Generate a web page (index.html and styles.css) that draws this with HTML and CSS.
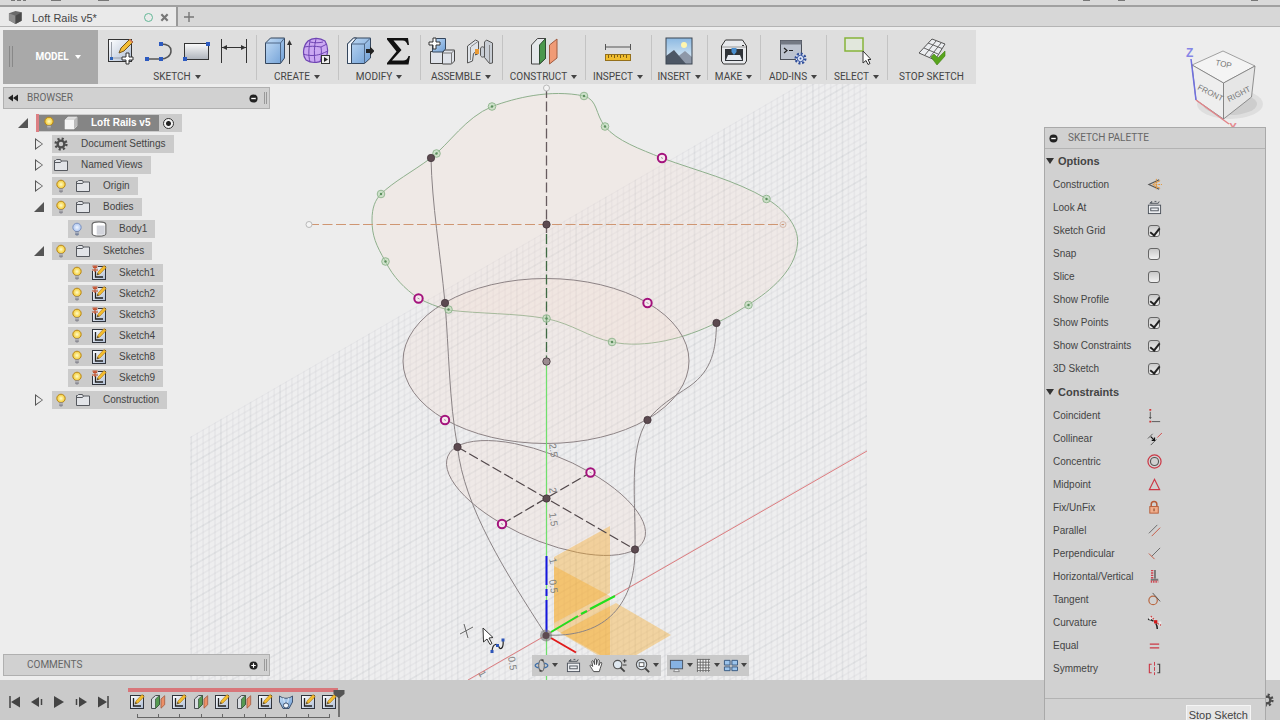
FILE: index.html
```html
<!DOCTYPE html>
<html lang="en">
<head>
<meta charset="utf-8">
<meta name="viewport" content="width=device-width, initial-scale=1">
<title>Loft Rails v5</title>
<link rel="stylesheet" href="styles.css">
</head>
<body>
<svg class="defs" aria-hidden="true">
  <defs>
    <linearGradient id="gBlue" x1="0" y1="0" x2="1" y2="1"><stop offset="0" stop-color="#c3dcf5"/><stop offset="1" stop-color="#6f9fd6"/></linearGradient>
    <linearGradient id="gPaper" x1="0" y1="0" x2="1" y2="1"><stop offset="0" stop-color="#fff"/><stop offset="1" stop-color="#aebdd4"/></linearGradient>
    <linearGradient id="gGray" x1="0" y1="0" x2="0" y2="1"><stop offset="0" stop-color="#fbfbfb"/><stop offset="1" stop-color="#aeb3bb"/></linearGradient>
    <linearGradient id="gSky" x1="0" y1="0" x2="0" y2="1"><stop offset="0" stop-color="#8cb9e2"/><stop offset="1" stop-color="#e8f3f8"/></linearGradient>
    <radialGradient id="gBulb"><stop offset="0" stop-color="#fffcc8"/><stop offset="1" stop-color="#f3c92e"/></radialGradient>
    <radialGradient id="gOff"><stop offset="0" stop-color="#f2f7ff"/><stop offset="1" stop-color="#a9c2ee"/></radialGradient>
  </defs>
  <symbol id="bulb" viewBox="0 0 14 14"><circle cx="7" cy="5.400" r="4.200" fill="url(#gBulb)" stroke="#b8871c"/><path d="M5.200 9.300h3.600v3L8 13.500H6l-.8-1.200z" fill="#8b8b94"/><path d="M5.200 10.800h3.600" stroke="#ddd" stroke-width=".7"/></symbol>
  <symbol id="bulb-off" viewBox="0 0 14 14"><circle cx="7" cy="5.400" r="4.200" fill="url(#gOff)" stroke="#7f94c0"/><path d="M5.200 9.300h3.600v3L8 13.500H6l-.8-1.200z" fill="#77839c"/><path d="M5.200 10.800h3.600" stroke="#ddd" stroke-width=".7"/></symbol>
  <symbol id="folder" viewBox="0 0 14 14"><path d="M.5 12.500V2.500h1l1-1h4l.7 1.500h6.300v9.500z" fill="#e2e4e8" stroke="#55585e"/><path d="M1 4.500h5.500l1-1.500" fill="none" stroke="#55585e"/></symbol>
  <symbol id="sketch" viewBox="0 0 16 16"><rect x="1.500" y="1.500" width="13" height="13" fill="url(#gPaper)" stroke="#30343c"/><path d="M4.500 4v8H12" fill="none" stroke="#222" stroke-width="1.300"/><path d="M6 10l1-3 6-6.500 2.200 2L9 9z" fill="#f4bd2d" stroke="#a8741b" stroke-width=".6"/><path d="M6 10l.7-2 1.300 1.300z" fill="#333"/></symbol>
  <symbol id="sketch3" viewBox="0 0 16 16"><use href="#sketch"/><path d="M0 0h7v6H0z" fill="#cbcbcb"/><path d="M1 5h6M2 2.500h4M4 1v6M1.500 1.200h5" stroke="#c5512f" stroke-width="1.200"/></symbol>
  <symbol id="planes" viewBox="0 0 16 16"><path d="M1.500 5l4-3.500h4v9l-4 4h-4z" fill="#d9dde2" stroke="#4a4d52"/><path d="M5.500 5l4-3.500v9l-4 4z" fill="#559a51" stroke="#36533a" stroke-width=".7"/><path d="M11 5l3.700-3.300v9L11 14.200z" fill="#ec8f67" stroke="#9f5b40" stroke-width=".8"/></symbol>
  <symbol id="loft" viewBox="0 0 16 16"><path d="M1.500 2c4 3 9 3 13 0v6L11 14.500H5L1.500 8z" fill="url(#gBlue)" stroke="#3f536f"/><path d="M5.500 4l1.500 8M10.500 4L9 12" stroke="#e9f3ff" stroke-width=".8"/><circle cx="8" cy="11.500" r="2.600" fill="#eef4fb" stroke="#3f536f"/></symbol>
  <symbol id="gear" viewBox="0 0 14 14"><circle cx="7" cy="7" r="5.400" fill="none" stroke="#4c4c4c" stroke-width="2.400" stroke-dasharray="2.100 2.140"/><circle cx="7" cy="7" r="3.400" fill="none" stroke="#4c4c4c" stroke-width="2.400"/></symbol>
  <symbol id="lookat" viewBox="0 0 16 16"><rect x="1.500" y="5.500" width="13" height="9" fill="#eceef1" stroke="#4c525b"/><rect x="4" y="8.500" width="8" height="3" fill="none" stroke="#4c525b"/><path d="M3 3.500h9l1-2M3 3.500l2-2v2M8 1.500h2" fill="none" stroke="#4c525b"/></symbol>
</svg>

<div class="app">
  <header class="titlebar" aria-hidden="true">
    <svg class="stubs" viewBox="0 0 120 3"><path d="M11 0h4v1h-4zM17 0h4v1h-4zM23 0h3v1h-3zM51 0h10v1H51zM98 0h11v1H98z" fill="#777"/></svg>
    <svg class="stubs" viewBox="0 0 240 3"><path d="M43 0h7v1h-7zM78 0h7v1h-7zM211 0h7v1h-7z" fill="#777"/></svg>
  </header>

  <nav class="tabs" aria-label="Documents">
    <div class="tab">
      <svg class="tab-cube" viewBox="0 0 16 16"><path d="M1 3.500L8 1l6.500 1.500v9L8 15l-7-4z" fill="#6a6a6a"/><path d="M1 3.500L8 6v9l-7-4z" fill="#8f8f8f"/><path d="M8 6l6.500-3.500v9L8 15z" fill="#4a4a4a"/></svg>
      <span class="tab-name">Loft Rails v5*</span>
      <span class="tab-status"></span>
      <button class="tab-button" aria-label="Close"><svg viewBox="0 0 10 10"><path d="M1.500 1.500l7 7M8.500 1.500l-7 7" stroke="#777" stroke-width="2.400"/></svg></button>
    </div>
    <button class="tab-button tab-new" aria-label="New tab"><svg viewBox="0 0 10 10"><path d="M5 0v10M0 5h10" stroke="#777" stroke-width="1.400"/></svg></button>
  </nav>

  <main class="workspace">
    <svg class="canvas" viewBox="0 27 1280 653" preserveAspectRatio="xMidYMid slice" role="img" aria-label="Sketch model">
      <defs>
        <pattern id="grid" width="29.600" height="34.200" patternUnits="userSpaceOnUse" patternTransform="translate(546.500 635) skewY(-30)">
          <path d="M5.920 0v34.200M11.840 0v34.200M17.760 0v34.200M23.680 0v34.200M0 6.840h29.600M0 13.680h29.600M0 20.520h29.600M0 27.360h29.600" stroke="#8a8f95" stroke-opacity=".2" stroke-width=".7"/>
          <path d="M0 0v34.200M29.600 0v34.200M0 0h29.600M0 34.200h29.600" stroke="#7c8187" stroke-opacity=".26" stroke-width=".8"/>
        </pattern>
        <symbol id="gp" viewBox="-5 -5 10 10"><circle r="3.800" fill="#b9dab6" fill-opacity=".6" stroke="#8db38b" stroke-width=".9"/><circle r="1.200" fill="#5c8f5e"/></symbol>
        <symbol id="dp" viewBox="-5 -5 10 10"><circle r="3.700" fill="#5c4a50" stroke="#3f3238" stroke-width=".7"/></symbol>
        <symbol id="mp" viewBox="-6 -6 12 12"><circle r="4.200" fill="#f6e8ee" stroke="#a3127c" stroke-width="2"/><path d="M-1-.5l2 1" stroke="#888" stroke-width=".8"/></symbol>
      </defs>
      <path d="M190 437L801 84h66v596H190z" fill="#eeeeef"/>
      <path d="M190 437L801 84h66v596H190z" fill="url(#grid)"/>

      <g class="profile" fill="#f5d9cd" fill-opacity=".22">
        <path d="M584 96C598 100 595 114 605 126.500C617 141 640 149 662 158C697 171 735 180 767 199C790 213 799 231 797.500 244C795 270 772 290 748 305C735 313 727 318 716 323C686 338 645 349 612 342C588 337 573 324 546 318.500C515 313 480 314 448 310C438 307 427 303 418 298C405 289 393 277 385.500 261.500C376 245 372 236 372 220C372 208 375 200 381 194C393 182 412 172 431 158C450 143 465 118 492 106.500C515 98 550 89 584 96z" stroke="#8fb08d"/>
        <ellipse cx="546" cy="361" rx="143" ry="82.500" stroke="#8d8385"/>
        <circle r="1" transform="matrix(89 51.500 44.500 -25.500 546 498)" vector-effect="non-scaling-stroke" stroke="#8d8385"/>
      </g>

      <g fill="#f7a823" fill-opacity=".38">
        <path d="M554 557l56-31v67l-56 30z"/>
        <path d="M554 566l56 30v61h-6l-50-28z"/>
        <path d="M560 633l56-30 55 32-38 22h-32z"/>
      </g>

      <path d="M546.500 361v319" stroke="#6fe06c" stroke-width="1.200"/>
      <path d="M867 451L468 680" stroke="#df7d80"/>

      <g fill="none" stroke="#8a8385">
        <path d="M431 158C432 205 440 250 445 303C449 350 449 400 457.500 447C464 507 506 573 546 635"/>
        <path d="M716.500 323C716 350 712 370 690 386C672 398 660 405 647.500 420C628 450 636 500 635 549C635 610 600 638 546 635"/>
      </g>
      <g fill="none" stroke-dasharray="10 3.500">
        <path d="M309 224.500h475" stroke="#cf9672" stroke-width="1.200"/>
        <path d="M546.500 88v146" stroke="#675b5f" stroke-width="1.300"/>
        <path d="M546.500 234v127" stroke="#3f6a43" stroke-width="1.300"/>
        <path d="M457.500 447L635 549.500M502 524l88.500-51.500" stroke="#51474a" stroke-width="1.200"/>
      </g>
      <g fill="none" stroke-width="2">
        <path d="M546.500 556v29M546.500 589v7M546.500 600v32" stroke="#1616e0"/>
        <path d="M551 632l27-16M581 614l6-3M590 609l25-13" stroke="#22e01d"/>
        <path d="M551 638l25 14.500" stroke="#e01b1b"/>
      </g>

      <g class="ruler">
        <text transform="translate(549 444) rotate(82)">2.5</text>
        <text transform="translate(549 488) rotate(82)">2</text>
        <text transform="translate(549 513) rotate(82)">1.5</text>
        <text transform="translate(549 559) rotate(76)">1</text>
        <text transform="translate(549 580) rotate(82)">0.5</text>
        <text transform="translate(508 657) rotate(82)">0.5</text>
        <text transform="translate(478 673) rotate(60)">1</text>
      </g>

      <g fill="#f4f4f4" stroke="#b9b9b9"><circle cx="309" cy="224.500" r="3"/><circle cx="783" cy="224.500" r="3" fill="none" stroke="#d6b9ab"/><circle cx="546.500" cy="88" r="3"/></g>
      <g>
        <use href="#gp" x="579" y="91" width="10" height="10"/><use href="#gp" x="600" y="121.500" width="10" height="10"/>
        <use href="#gp" x="761.500" y="194" width="10" height="10"/><use href="#gp" x="743.500" y="300" width="10" height="10"/>
        <use href="#gp" x="607" y="337" width="10" height="10"/><use href="#gp" x="541.500" y="313.500" width="10" height="10"/>
        <use href="#gp" x="443.500" y="304.500" width="10" height="10"/><use href="#gp" x="380.500" y="256.500" width="10" height="10"/>
        <use href="#gp" x="376" y="189" width="10" height="10"/><use href="#gp" x="431.500" y="148.500" width="10" height="10"/>
        <use href="#gp" x="487" y="101.500" width="10" height="10"/>
        <use href="#dp" x="426" y="153" width="10" height="10"/><use href="#dp" x="541.500" y="219.500" width="10" height="10"/>
        <use href="#dp" x="440" y="298" width="10" height="10"/><use href="#dp" x="711.500" y="318" width="10" height="10"/>
        <use href="#dp" x="642.500" y="415" width="10" height="10"/><use href="#dp" x="452.500" y="442" width="10" height="10"/>
        <use href="#dp" x="541.500" y="493.500" width="10" height="10"/><use href="#dp" x="630" y="544.500" width="10" height="10"/>
        <use href="#mp" x="656" y="152" width="12" height="12"/><use href="#mp" x="412.500" y="292.500" width="12" height="12"/>
        <use href="#mp" x="641.500" y="297" width="12" height="12"/><use href="#mp" x="439" y="414" width="12" height="12"/>
        <use href="#mp" x="584.500" y="466.500" width="12" height="12"/><use href="#mp" x="496" y="518" width="12" height="12"/>
        <circle cx="546.500" cy="361.500" r="3.700" fill="#9b8b90" stroke="#55474d"/>
        <circle cx="546" cy="635.500" r="6" fill="#777" fill-opacity=".6"/><circle cx="546" cy="635.500" r="3.500" fill="#5c4a50"/>
      </g>
      <path d="M460 634l13-7M464 624l4 14" stroke="#666" fill="none"/>
      <path d="M483 628l.5 14 3.500-3 3 5.500 2-1-3-5.500 4-.5z" fill="#fff" stroke="#333"/>
      <path d="M492 651c1-9 6-7 7-4s5 2 4-7" fill="none" stroke="#222" stroke-width="1.200"/>
      <path d="M490.500 650h3v3h-3zM496 644h3v3h-3zM501.500 638.500h3v3h-3z" fill="#2d55b8"/>
    </svg>

    <svg class="viewcube" viewBox="1180 40 90 90" role="img" aria-label="View cube">
      <ellipse cx="1230" cy="104" rx="33" ry="15" fill="#777" fill-opacity=".12"/><ellipse cx="1230" cy="104" rx="27" ry="11" fill="#777" fill-opacity=".16"/>
      <path d="M1223 51l32 15-31.500 17L1192 65z" fill="#f4f4f4" stroke="#8b8b8b" stroke-width=".8"/>
      <path d="M1192 65l31.500 18v36L1196 100z" fill="#eee" stroke="#777" stroke-width=".8"/>
      <path d="M1255 66l-31.500 17v36l28-22z" fill="#e6e6e6" stroke="#777" stroke-width=".8"/>
      <path d="M1191 59l5 41" stroke="#6f6fe0" stroke-width="1.500"/><path d="M1196 100l33 24" stroke="#e3858a" stroke-width="1.500"/>
      <text class="cube-face" transform="translate(1215 65) rotate(12)">TOP</text>
      <text class="cube-face" transform="translate(1197 89) rotate(27)">FRONT</text>
      <text class="cube-face" transform="translate(1229 102) rotate(-27)">RIGHT</text>
      <text class="axis axis-z" x="1186" y="57">Z</text><text class="axis axis-x" x="1229" y="132">X</text>
    </svg>

    <div class="overlay">
      <div class="toolbar" role="toolbar" aria-label="Tools">
        <button class="model"><span class="grip"></span>MODEL<span class="caret"></span></button>
        <div class="group">
          <div class="tools">
            <button aria-label="Create sketch"><svg viewBox="0 0 28 28"><rect x="2.500" y="2.500" width="23" height="22" fill="url(#gPaper)" stroke="#333"/><path d="M5.500 5v16H23" fill="none" stroke="#9a9fa8"/><path d="M13 16l2-5L24 2l3 3-9 9z" fill="#f3bd35" stroke="#76551d"/><path d="M23 3l1-1 3 3-1 1z" fill="#d77b62"/><path d="M4 20h3v3H4z" fill="#2d62b8"/><path d="M20 16h3v4h4v3h-4v4h-3v-4h-4v-3h4z" fill="#fff" stroke="#333"/></svg></button>
            <button aria-label="Line"><svg viewBox="0 0 28 28"><path d="M3 22h14c5 0 10-3 10-8s-4-7-10-7" fill="none" stroke="#555" stroke-width="1.500"/><path d="M1 20h4v4H1zM15 20h4v4h-4zM15 5h4v4h-4z" fill="#2c5ac0"/></svg></button>
            <button aria-label="Rectangle"><svg viewBox="0 0 28 28"><rect x="2.500" y="6.500" width="24" height="16" fill="url(#gGray)" stroke="#333"/><path d="M24 5h4v4h-4zM1 20h4v4H1z" fill="#2c5ac0"/></svg></button>
            <button aria-label="Dimension"><svg viewBox="0 0 28 28"><path d="M1.500 2v24M26.500 2v24M2 10.500h24" stroke="#333" fill="none"/><path d="M2 10.500l5-2.500v5zM26 10.500L21 8v5z" fill="#333"/></svg></button>
          </div>
          <button class="group-label">SKETCH<span class="caret"></span></button>
        </div>
        <div class="group">
          <div class="tools">
            <button aria-label="Extrude"><svg viewBox="0 0 28 28"><path d="M1.500 6l5-5h14v20l-4 5.500h-15z" fill="url(#gBlue)" stroke="#34465d"/><path d="M1.500 6h15l4-5M16.500 6v20" fill="none" stroke="#4f6786"/><path d="M25.500 6v21" stroke="#333"/><path d="M25.500 3l2.500 5h-5z" fill="#333"/></svg></button>
            <button aria-label="Create form"><svg viewBox="0 0 28 28"><path d="M6 4c5-4 12-3 17 0 3 5 3 12 1 17-5 5-14 6-20 2-4-5-3-14 2-19z" fill="#cba8f2" stroke="#6f45b3" stroke-width="1.200"/><path d="M2 10c6-1 11-1 17 0 2-1 4-2 6-3M1 17c6 2 12 2 18 0 2-1 5-2 7-3M8 3c-1 7-2 15 0 22M14 2c-2 7-2 16-1 24M19 10c1 5 0 11-1 15M8 5c5 1 9 1 13 0" fill="none" stroke="#6f45b3"/><rect x="19.500" y="18.500" width="8" height="8" fill="#eee" stroke="#333"/><path d="M22 20l4 2.500-4 2.500z" fill="#222"/></svg></button>
          </div>
          <button class="group-label">CREATE<span class="caret"></span></button>
        </div>
        <div class="group">
          <div class="tools">
            <button aria-label="Press pull"><svg viewBox="0 0 28 28"><path d="M1.500 7l6-6h17v20l-6 5.500h-17z" fill="url(#gBlue)" stroke="#34465d"/><path d="M1.500 7l6-6h3l-5 6v19.500h-4z" fill="#f1f5fb" stroke="#34465d"/><path d="M5.500 7h13l6-6M18.500 7v19" fill="none" stroke="#4f6786"/><path d="M20 12h4V9.500l4.500 4.500-4.500 4.500V16h-4z" fill="#222"/></svg></button>
            <button aria-label="Parameters"><svg viewBox="0 0 28 28"><path d="M3 1h21l1 7h-1.500c-1-3-2-4.500-5-4.500H9.500l8 9.500L8 23.500h11c3 0 4.500-1.500 5.500-4.500H26l-1.500 8.500H3V26l9.500-11.500L3 2.500z" fill="#111"/></svg></button>
          </div>
          <button class="group-label">MODIFY<span class="caret"></span></button>
        </div>
        <div class="group">
          <div class="tools">
            <button aria-label="New component"><svg viewBox="0 0 28 28"><path d="M2.500 14.500h12v12h-12zM14.500 16l2-3h10v11l-3 3h-9z" fill="#dfe3ea" stroke="#444"/><path d="M14.500 16h9l3-3M23.500 16v11" fill="none" stroke="#777"/><path d="M4.500 5l4-3.500h9V12l-3 3h-10z" fill="url(#gBlue)" stroke="#34465d"/><path d="M5 1h3v4h4v3H8v4H5V8H1V5h4z" fill="#fff" stroke="#333"/></svg></button>
            <button aria-label="Joint"><svg viewBox="0 0 28 28"><path d="M1.500 9l8-6 3 1.500v12l-3 1.500v-3l-2 1.500-1 7.500-5 2z" fill="#dfe3e8" stroke="#555"/><path d="M4.500 10v13M5 9.500l7-5" stroke="#888"/><path d="M9 12h4v5H9z" fill="#e99a35"/><path d="M14.500 12c0-3 4-3 4 0v7c-1 2-4 1-4-1zM18.500 5l2-2 6 3v20l-3 .5-5-6z" fill="#c9ced5" stroke="#555"/><path d="M23.500 8v18" stroke="#888"/></svg></button>
          </div>
          <button class="group-label">ASSEMBLE<span class="caret"></span></button>
        </div>
        <div class="group">
          <div class="tools"><button aria-label="Offset plane"><svg viewBox="0 0 28 28"><path d="M1.500 8l6-6.500h8v20l-6 5.500h-8z" fill="#e5e8eb" stroke="#444"/><path d="M9.500 8l6-6.500v20l-6 5.500z" fill="#4b984c" stroke="#2d4d31"/><path d="M19.500 8L27 2v19l-7.500 6z" fill="#f09b76" stroke="#a05a3e"/></svg></button></div>
          <button class="group-label">CONSTRUCT<span class="caret"></span></button>
        </div>
        <div class="group">
          <div class="tools"><button aria-label="Measure"><svg viewBox="0 0 28 28"><path d="M1.500 7v6M26.500 7v6M2 10h24" stroke="#555"/><rect x="1.500" y="17.500" width="25" height="6" fill="#f0bd2d" stroke="#95701b"/><path d="M4.500 18v3M7.500 18v2M10.500 18v3M13.500 18v2M16.500 18v3M19.500 18v2M22.500 18v3" stroke="#805f16"/></svg></button></div>
          <button class="group-label">INSPECT<span class="caret"></span></button>
        </div>
        <div class="group">
          <div class="tools"><button aria-label="Insert image"><svg viewBox="0 0 28 28"><rect x="1" y="1" width="26" height="26" fill="url(#gSky)"/><circle cx="19" cy="8" r="3" fill="#fff6ae"/><path d="M11 21l9-7 7 6v7H11z" fill="#8e98a8"/><path d="M1 19l8-6 12 14H1z" fill="#4d5765"/><rect x="1" y="1" width="26" height="26" fill="none" stroke="#3d4652"/></svg></button></div>
          <button class="group-label">INSERT<span class="caret"></span></button>
        </div>
        <div class="group">
          <div class="tools"><button aria-label="3D print"><svg viewBox="0 0 28 28"><path d="M1.500 9l4-6h17l4 6v15l-2 3h-21l-2-3z" fill="#e7e9ec" stroke="#333"/><path d="M2 10h24" stroke="#999"/><path d="M5 12h18v12H5z" fill="#2f3338"/><path d="M8 18h12l2 5H6z" fill="#e8ecf2"/><path d="M11.500 11h5v4L14 18l-2.500-3z" fill="#4a8fd0"/><path d="M22 8h2v1h-2z" fill="#333"/></svg></button></div>
          <button class="group-label">MAKE<span class="caret"></span></button>
        </div>
        <div class="group">
          <div class="tools"><button aria-label="Scripts and add-ins"><svg viewBox="0 0 28 28"><rect x="1.500" y="3.500" width="21" height="19" fill="#bcc3cf" stroke="#4a4f58"/><path d="M1.500 3.500h21v4h-21z" fill="#737984"/><path d="M5 11l3 2.500L5 16M10 13.500h4" fill="none" stroke="#222" stroke-width="1.200"/><circle cx="21.500" cy="21.500" r="4.800" fill="#eef2fb" stroke="#314f9a" stroke-width="2.400" stroke-dasharray="2 1.700"/><circle cx="21.500" cy="21.500" r="3.200" fill="#dfe7f8" stroke="#314f9a"/><circle cx="21.500" cy="21.500" r="1" fill="#314f9a"/></svg></button></div>
          <button class="group-label">ADD-INS<span class="caret"></span></button>
        </div>
        <div class="group">
          <div class="tools"><button aria-label="Select"><svg viewBox="0 0 28 28"><rect x="2" y="1" width="18" height="13" fill="#e1e7dc" stroke="#86b43a" stroke-width="1.500"/><path d="M20 14v12l3-2.500 2 4 2-1-2-4h3z" fill="#fff" stroke="#333"/></svg></button></div>
          <button class="group-label">SELECT<span class="caret"></span></button>
        </div>
        <div class="group">
          <div class="tools"><button aria-label="Finish sketch"><svg viewBox="0 0 28 28"><path d="M14 2l13 5-10 16L1 16z" fill="#eceef1" stroke="#555"/><path d="M10 6l14 5.500M6 11l14 6M18 4L7 18M23 6L12 20" stroke="#666" fill="none"/><path d="M13 20l3-3 4 4 7-7v5l-8 9z" fill="#58a51d" stroke="#3f7d12" stroke-width=".6"/></svg></button></div>
          <button class="group-label">STOP SKETCH</button>
        </div>
      </div>

      <aside class="browser">
        <div class="bar">
          <button class="bar-icon" aria-label="Collapse panel"><svg viewBox="0 0 10 10"><path d="M5 1.500v7L0 5zM10 1.500v7L5 5z" fill="#222"/></svg></button>
          <h2>BROWSER</h2>
          <button class="round-icon" aria-label="Hide browser"><svg viewBox="0 0 10 10"><circle cx="5" cy="5" r="4.500" fill="#222"/><path d="M2.500 5h5" stroke="#fff" stroke-width="1.500"/></svg></button>
          <span class="bar-grip"></span>
        </div>
        <ul class="tree">
          <li>
            <div class="row root"><button class="twist open" aria-label="Collapse"></button><div class="chip root-chip"><span class="root-name"><svg class="bulb"><use href="#bulb"/></svg><svg class="icon" viewBox="0 0 14 14"><path d="M1 4l3-3h9v9l-3 3H1z" fill="#dadada" stroke="#eee" stroke-width=".6"/><path d="M1 4h9v9H1z" fill="#f5f5f5"/><path d="M10 4l3-3v9l-3 3z" fill="#bbb"/></svg>Loft Rails v5</span><input class="active-dot" type="radio" checked aria-label="Activate component"></div></div>
            <ul>
              <li><div class="row"><button class="twist" aria-label="Expand"></button><div class="chip"><svg class="icon"><use href="#gear"/></svg>Document Settings</div></div></li>
              <li><div class="row"><button class="twist" aria-label="Expand"></button><div class="chip"><svg class="icon"><use href="#folder"/></svg>Named Views</div></div></li>
              <li><div class="row"><button class="twist" aria-label="Expand"></button><div class="chip"><svg class="bulb"><use href="#bulb"/></svg><svg class="icon"><use href="#folder"/></svg>Origin</div></div></li>
              <li><div class="row"><button class="twist open" aria-label="Collapse"></button><div class="chip"><svg class="bulb"><use href="#bulb"/></svg><svg class="icon"><use href="#folder"/></svg>Bodies</div></div>
                <ul class="leaves">
                  <li><div class="row leaf"><div class="chip"><svg class="bulb"><use href="#bulb-off"/></svg><svg class="icon" viewBox="0 0 14 14"><path d="M1 3c0-3 12-3 12 0v8c0 3-12 3-12 0z" fill="#fff" stroke="#666"/><path d="M5 4h7v8H5z" fill="#d3d5dc"/></svg>Body1</div></div></li>
                </ul>
              </li>
              <li><div class="row"><button class="twist open" aria-label="Collapse"></button><div class="chip"><svg class="bulb"><use href="#bulb"/></svg><svg class="icon"><use href="#folder"/></svg>Sketches</div></div>
                <ul class="leaves">
                  <li><div class="row leaf"><div class="chip"><svg class="bulb"><use href="#bulb"/></svg><svg class="icon"><use href="#sketch3"/></svg>Sketch1</div></div></li>
                  <li><div class="row leaf"><div class="chip"><svg class="bulb"><use href="#bulb"/></svg><svg class="icon"><use href="#sketch3"/></svg>Sketch2</div></div></li>
                  <li><div class="row leaf"><div class="chip"><svg class="bulb"><use href="#bulb"/></svg><svg class="icon"><use href="#sketch3"/></svg>Sketch3</div></div></li>
                  <li><div class="row leaf"><div class="chip"><svg class="bulb"><use href="#bulb"/></svg><svg class="icon"><use href="#sketch"/></svg>Sketch4</div></div></li>
                  <li><div class="row leaf"><div class="chip"><svg class="bulb"><use href="#bulb"/></svg><svg class="icon"><use href="#sketch"/></svg>Sketch8</div></div></li>
                  <li><div class="row leaf"><div class="chip"><svg class="bulb"><use href="#bulb"/></svg><svg class="icon"><use href="#sketch3"/></svg>Sketch9</div></div></li>
                </ul>
              </li>
              <li><div class="row"><button class="twist" aria-label="Expand"></button><div class="chip"><svg class="bulb"><use href="#bulb"/></svg><svg class="icon"><use href="#folder"/></svg>Construction</div></div></li>
            </ul>
          </li>
        </ul>
      </aside>

      <div class="dock">
        <div class="bar comments">
          <span class="bar-icon"></span>
          <h2>COMMENTS</h2>
          <button class="round-icon" aria-label="Show comments"><svg viewBox="0 0 10 10"><circle cx="5" cy="5" r="4.500" fill="#222"/><path d="M2.500 5h5M5 2.500v5" stroke="#fff" stroke-width="1.300"/></svg></button>
          <span class="bar-grip"></span>
        </div>
        <div class="navbar">
          <div class="nav-group">
            <button aria-label="Orbit"><svg viewBox="0 0 16 16"><ellipse cx="8" cy="8" rx="3" ry="6.500" fill="none" stroke="#555"/><path d="M5 5.500c-5 1-5 4 0 5M11 5.500c5 1 5 4 0 5" fill="none" stroke="#3f6fa8" stroke-width="1.300"/><path d="M6 12l3 1.500L6 15zM10 4L7 2.500 10 1z" fill="#444"/></svg><span class="caret"></span></button>
            <button aria-label="Look at"><svg><use href="#lookat"/></svg></button>
            <button aria-label="Pan"><svg viewBox="0 0 16 16"><path d="M5 14.500c-2-3-3-5-4-6 0-1.500 1.500-1 3 .5L3 4c0-1.500 1.500-1.500 2 0l1 3V2c0-1.500 2-1.500 2 0v5l1-4.500c.5-1.300 2-1 2 .5l-.5 5 1.500-3c1-1 2 0 1.500 1.500L12 11l-1 3.500z" fill="#fff" stroke="#444"/></svg></button>
            <button aria-label="Zoom"><svg viewBox="0 0 16 16"><circle cx="6" cy="7" r="4.500" fill="#dfe8f0" stroke="#555" stroke-width="1.200"/><path d="M9 10l4.500 4.500" stroke="#444" stroke-width="2"/><path d="M11.500 3h4M13.500 1v4M11.500 7.500h4" stroke="#333"/></svg></button>
            <button aria-label="Fit"><svg viewBox="0 0 16 16"><circle cx="7" cy="7" r="5.500" fill="#dfe8f0" stroke="#555" stroke-width="1.200"/><rect x="4.500" y="5" width="5" height="4" fill="#fff" stroke="#555"/><path d="M11 11l4 4" stroke="#444" stroke-width="2"/></svg><span class="caret"></span></button>
          </div>
          <div class="nav-group">
            <button aria-label="Display settings"><svg viewBox="0 0 16 16"><rect x="1.500" y="2.500" width="13" height="9" fill="#86b2e3" stroke="#4b5360"/><path d="M6 12h4l1 2.500H5z" fill="#e6e8eb" stroke="#666" stroke-width=".7"/></svg><span class="caret"></span></button>
            <button aria-label="Grid and snaps"><svg viewBox="0 0 16 16"><path d="M1 1h14v14H1z" fill="#f3f3f3"/><path d="M1.500 1v14M4.500 1v14M7.500 1v14M10.500 1v14M13.500 1v14M1 1.500h14M1 4.500h14M1 7.500h14M1 10.500h14M1 13.500h14" stroke="#666"/></svg><span class="caret"></span></button>
            <button aria-label="Viewports"><svg viewBox="0 0 16 16"><path d="M1.500 2.500h6v5h-6zM9.500 2.500h6v5h-6zM1.500 9.500h6v4h-6zM9.500 9.500h6v4h-6z" fill="#9cc4ec" stroke="#36577f"/></svg><span class="caret"></span></button>
          </div>
        </div>
      </div>
    </div>
  </main>

  <footer class="timeline">
    <div class="playback">
      <button aria-label="Go to start"><svg viewBox="0 0 14 14"><path d="M2 1v12" stroke="#444" stroke-width="1.500"/><path d="M12 1.500v11L3 7z" fill="#444"/></svg></button>
      <button aria-label="Step back"><svg viewBox="0 0 14 14"><path d="M9 2v10L1 7z" fill="#444"/><path d="M11.500 4v6" stroke="#444" stroke-width="1.500"/></svg></button>
      <button aria-label="Play"><svg viewBox="0 0 14 14"><path d="M2 1l10 6-10 6z" fill="#444"/></svg></button>
      <button aria-label="Step forward"><svg viewBox="0 0 14 14"><path d="M5 2v10l8-5z" fill="#444"/><path d="M2.500 4v6" stroke="#444" stroke-width="1.500"/></svg></button>
      <button aria-label="Go to end"><svg viewBox="0 0 14 14"><path d="M12 1v12" stroke="#444" stroke-width="1.500"/><path d="M2 1.500v11L11 7z" fill="#444"/></svg></button>
    </div>
    <div class="track">
      <div class="track-bar"></div>
      <div class="features">
        <button aria-label="Sketch1"><svg><use href="#sketch"/></svg></button>
        <button aria-label="Plane1"><svg><use href="#planes"/></svg></button>
        <button aria-label="Sketch2"><svg><use href="#sketch"/></svg></button>
        <button aria-label="Plane2"><svg><use href="#planes"/></svg></button>
        <button aria-label="Sketch3"><svg><use href="#sketch"/></svg></button>
        <button aria-label="Plane3"><svg><use href="#planes"/></svg></button>
        <button aria-label="Sketch4"><svg><use href="#sketch"/></svg></button>
        <button aria-label="Loft1"><svg><use href="#loft"/></svg></button>
        <button aria-label="Sketch8"><svg><use href="#sketch"/></svg></button>
        <button aria-label="Sketch9"><svg><use href="#sketch"/></svg></button>
      </div>
      <svg class="marker" viewBox="0 0 12 30"><path d="M.5 2h11v4L6.500 10h-1L.5 6z" fill="#555"/><path d="M6 9v20" stroke="#555" stroke-width="1.500"/></svg>
    </div>
    <button class="settings" aria-label="Timeline settings"><svg><use href="#gear"/></svg></button>
  </footer>

  <section class="palette" aria-label="Sketch palette">
    <div class="palette-head">
      <button class="round-icon" aria-label="Collapse palette"><svg viewBox="0 0 10 10"><circle cx="5" cy="5" r="4.500" fill="#222"/><path d="M2.500 5h5" stroke="#fff" stroke-width="1.500"/></svg></button>
      <h2>SKETCH PALETTE</h2>
    </div>
    <div class="palette-body">
      <h3><span class="fold"></span>Options</h3>
      <div class="option"><label for="o1">Construction</label><button id="o1"><svg viewBox="0 0 16 16"><path d="M13 3L2 8l11 5" fill="none" stroke="#555" stroke-width="1.200"/><path d="M6 8h10M10 2v12" stroke="#e29438" stroke-dasharray="2 1"/><path d="M7 7l7-3M7 9l7 3" stroke="#e29438"/></svg></button></div>
      <div class="option"><label for="o2">Look At</label><button id="o2"><svg><use href="#lookat"/></svg></button></div>
      <div class="option"><label for="o3">Sketch Grid</label><input id="o3" type="checkbox" checked></div>
      <div class="option"><label for="o4">Snap</label><input id="o4" type="checkbox"></div>
      <div class="option"><label for="o5">Slice</label><input id="o5" type="checkbox"></div>
      <div class="option"><label for="o6">Show Profile</label><input id="o6" type="checkbox" checked></div>
      <div class="option"><label for="o7">Show Points</label><input id="o7" type="checkbox" checked></div>
      <div class="option"><label for="o8">Show Constraints</label><input id="o8" type="checkbox" checked></div>
      <div class="option"><label for="o9">3D Sketch</label><input id="o9" type="checkbox" checked></div>
      <h3><span class="fold"></span>Constraints</h3>
      <div class="option"><label for="c1">Coincident</label><button id="c1"><svg viewBox="0 0 16 16"><path d="M3.500 4v7M5 14.500h9" stroke="#555"/><path d="M2 9.500h3L3.500 12z" fill="#555"/><path d="M2.500 1h2v2h-2zM2.500 13.500h2v2h-2z" fill="#d03434"/></svg></button></div>
      <div class="option"><label for="c2">Collinear</label><button id="c2"><svg viewBox="0 0 16 16"><path d="M1 8l5-5M4 15l6-6" stroke="#555"/><path d="M11 7l5-5" stroke="#d34848"/><path d="M4 6l4 4M8 7v3H5" stroke="#111" stroke-width="1.300" fill="none"/></svg></button></div>
      <div class="option"><label for="c3">Concentric</label><button id="c3"><svg viewBox="0 0 16 16"><circle cx="8" cy="8" r="7" fill="none" stroke="#cc3846" stroke-width="1.300"/><circle cx="8" cy="8" r="4.300" fill="none" stroke="#555" stroke-width="1.200"/></svg></button></div>
      <div class="option"><label for="c4">Midpoint</label><button id="c4"><svg viewBox="0 0 16 16"><path d="M8 2.500l5.500 11h-11z" fill="none" stroke="#cc3846" stroke-width="1.200"/></svg></button></div>
      <div class="option"><label for="c5">Fix/UnFix</label><button id="c5"><svg viewBox="0 0 16 16"><path d="M4.500 7V4.500c0-4 6-4 6 0V7" fill="none" stroke="#b75b36" stroke-width="1.600"/><rect x="3" y="7" width="9" height="7" fill="#f0ae8c" stroke="#b75b36"/><path d="M7.500 9v3" stroke="#733619"/></svg></button></div>
      <div class="option"><label for="c6">Parallel</label><button id="c6"><svg viewBox="0 0 16 16"><path d="M2 11l9-9" stroke="#666"/><path d="M5 14l9-9" stroke="#c5563f"/></svg></button></div>
      <div class="option"><label for="c7">Perpendicular</label><button id="c7"><svg viewBox="0 0 16 16"><path d="M5 11l9-9" stroke="#666"/><path d="M2 8l6 6" stroke="#c5563f"/></svg></button></div>
      <div class="option"><label for="c8">Horizontal/Vertical</label><button id="c8"><svg viewBox="0 0 16 16"><path d="M8.500 1v9M4 11.500h8" stroke="#777" stroke-width="2"/><path d="M5.500 1v9M4 13.500h8" stroke="#cf4450" stroke-width="2.500" stroke-dasharray="1.500 1"/></svg></button></div>
      <div class="option"><label for="c9">Tangent</label><button id="c9"><svg viewBox="0 0 16 16"><circle cx="6.500" cy="9" r="4.500" fill="none" stroke="#b96842" stroke-width="1.300"/><path d="M6 1l8 9" stroke="#555"/></svg></button></div>
      <div class="option"><label for="c10">Curvature</label><button id="c10"><svg viewBox="0 0 16 16"><path d="M1 4.500c2 0 4 .5 6 2M9.500 9c1 2 1.500 4 1.500 6" stroke="#222" stroke-width="1.600" fill="none"/><path d="M4 1l4 4M11 9l4 2M4 2l-1 3M14 7v5" stroke="#e9e9e9" stroke-width="2.400"/><path d="M4 1l4 4M11 9l4 2" stroke="#c84b4b" stroke-width="1.400" stroke-dasharray="2 1"/><path d="M7.500 5.500h3.500V9H7.500z" fill="#d21717"/></svg></button></div>
      <div class="option"><label for="c11">Equal</label><button id="c11"><svg viewBox="0 0 16 16"><path d="M3 6.500h10M3 10.500h10" stroke="#cc3846" stroke-width="1.200"/></svg></button></div>
      <div class="option"><label for="c12">Symmetry</label><button id="c12"><svg viewBox="0 0 16 16"><path d="M5 3.500H2.500v9H5" fill="none" stroke="#cc3846" stroke-width="1.200"/><path d="M8 1v14" stroke="#cc3846" stroke-dasharray="4 1.500"/><path d="M11 3.500h2.500v9H11" fill="none" stroke="#444" stroke-width="1.200"/></svg></button></div>
    </div>
    <div class="palette-foot"><button class="stop">Stop Sketch</button></div>
  </section>
</div>
</body>
</html>
```

FILE: styles.css
```css
* { box-sizing: border-box; }

body {
  margin: 0;
  font-family: "Liberation Sans", Arial, sans-serif;
  font-size: 10px;
  line-height: 12px;
  color: #444;
  background: #ededed;
}

button {
  margin: 0;
  padding: 0;
  border: 0;
  background: none;
  color: inherit;
  font: inherit;
}

svg { display: block; }
h2, h3 { margin: 0; }
ul { list-style: none; margin: 0; padding: 0; }

.defs { position: absolute; width: 0; height: 0; }

.app {
  position: relative;
  display: flex;
  flex-direction: column;
  height: 100vh;
  overflow: hidden;
}

.caret {
  display: inline-block;
  margin-left: 4px;
  vertical-align: 1px;
  border: 3px solid transparent;
  border-top: 4px solid currentColor;
  border-bottom: 0;
}

/* Title bar and tabs */
.titlebar {
  display: flex;
  justify-content: space-between;
  height: 7px;
  background: #d9d9d9;
  border-bottom: 2px solid #a0a0a0;
}
.stubs { height: 3px; }

.tabs {
  display: flex;
  height: 20px;
  background: #d7d7d7;
  border-bottom: 1px solid #b4b4b4;
}
.tab {
  display: flex;
  align-items: center;
  width: 178px;
  padding: 2px 7px 0 8px;
  background: #eaeaea;
  border-right: 2px solid #999;
}
.tab-cube { width: 15px; height: 15px; margin-right: 9px; }
.tab-name { flex: 1; font-size: 11px; }
.tab-status {
  width: 9px;
  height: 9px;
  margin-right: 7px;
  border: 1px solid #63b897;
  border-radius: 50%;
}
.tab-button svg { width: 9px; height: 9px; }
.tab-new { margin-left: 6px; }
.tab-new svg { width: 10px; height: 10px; }

/* Workspace */
.workspace { position: relative; flex: 1; min-height: 0; }
.canvas { position: absolute; inset: 0; width: 100%; height: 100%; }
.profile { stroke-width: 1; }
.ruler { font-size: 10px; fill: #808080; }
.viewcube { position: absolute; top: 13px; right: 10px; width: 90px; height: 90px; overflow: visible; }
.cube-face { font-size: 8px; fill: #777; }
.axis { font-size: 12px; font-weight: bold; }
.axis-z { fill: #8585e6; }
.axis-x { fill: #e58b90; }

.overlay {
  position: relative;
  display: flex;
  flex-direction: column;
  height: 100%;
  padding: 3px 0 4px 3px;
}

/* Toolbar */
.toolbar {
  display: grid;
  grid-template-columns: 95px 158px 82px 82px 82px 83px 66px 56px 53px 66px 61px 89px;
  width: max-content;
  background: #dedede;
  font-family: Roboto, "Liberation Sans", sans-serif;
}
.model {
  display: flex;
  align-items: center;
  justify-content: center;
  gap: 2px;
  position: relative;
  padding-left: 15px;
  background: #a9a9a9;
  color: #fff;
  font-size: 10px;
  font-weight: bold;
}
.grip {
  position: absolute;
  left: 6px;
  top: 16px;
  width: 4px;
  height: 21px;
  border: solid #888;
  border-width: 0 1px;
}
.group {
  display: flex;
  flex-direction: column;
  align-items: center;
  gap: 4px;
  padding: 7px 0 0;
  position: relative;
}
.group + .group::before {
  content: "";
  position: absolute;
  left: 0;
  top: 5px;
  bottom: 4px;
  border-left: 1px solid #c3c3c3;
}
.tools { display: flex; gap: 10px; }
.tools svg { width: 28px; height: 28px; }
.group-label { height: 15px; line-height: 16px; white-space: nowrap; }

/* Panel bars */
.bar {
  display: flex;
  align-items: center;
  width: 267px;
  height: 22px;
  padding: 0 2px 0 4px;
  background: #d1d1d1;
  border: 1px solid #b0b0b0;
}
.bar h2, .palette-head h2 {
  flex: 1;
  font-family: Roboto, "Liberation Sans", sans-serif;
  font-size: 10px;
  font-weight: normal;
  color: #666;
}
.bar-icon { width: 10px; margin-right: 9px; }
.round-icon svg { width: 9px; height: 9px; }
.bar-grip {
  width: 3px;
  height: 12px;
  margin-left: 6px;
  border: solid #999;
  border-width: 0 1px;
}

/* Browser tree */
.browser { flex: 1; min-height: 0; margin-top: 3px; }
.tree { padding-top: 5px; }
.leaves { padding: 1px 0; }
.row { display: flex; align-items: center; height: 18px; margin-bottom: 3px; padding-left: 29px; }
.root { padding-left: 13px; }
.leaf { padding-left: 65px; }
.twist {
  width: 14px;
  height: 14px;
  margin-right: 6px;
  position: relative;
}
.twist::before {
  content: "";
  position: absolute;
  inset: 1px 3px;
  background: #555;
  clip-path: polygon(0 0, 100% 50%, 0 100%, 0 0, 1px 2px, 1px 10px, 7px 6px, 1px 2px);
}
.twist.open::before { inset: 2px; clip-path: polygon(100% 0, 100% 100%, 0 100%); }
.chip {
  display: flex;
  align-items: center;
  height: 18px;
  padding-right: 8px;
  background: #cbcbcb;
  white-space: nowrap;
}
.bulb { width: 14px; height: 14px; margin: 0 6px 0 2px; }
.icon { width: 14px; height: 14px; margin: 0 13px 0 2px; }
.leaf .icon { width: 16px; height: 16px; margin: 0 12px 0 1px; }
.root-chip { border-left: 3px solid #dc7f83; }
.root-name {
  display: flex;
  align-items: center;
  height: 16px;
  padding-right: 9px;
  padding-left: 1px;
  background: #858585;
  color: #fff;
  font-weight: bold;
}
.active-dot {
  appearance: none;
  width: 11px;
  height: 11px;
  margin: 0 0 0 4px;
  border: 1px solid #333;
  border-radius: 50%;
  background: radial-gradient(circle, #222 0 2px, #f4f4f4 3px);
}

/* Bottom dock */
.dock {
  display: grid;
  grid-template-columns: 1fr auto 1fr;
  align-items: center;
  margin-left: -3px;
}
.comments { margin-left: 3px; }
.navbar { display: flex; gap: 6px; }
.nav-group {
  display: flex;
  align-items: center;
  gap: 8px;
  height: 21px;
  padding: 0 2px;
  background: #c9c9c9;
}
.nav-group button { display: flex; align-items: center; }
.nav-group svg { width: 15px; height: 15px; }
.nav-group .caret { margin-left: 3px; }
.nav-group + .nav-group { gap: 3px; }

/* Timeline */
.timeline {
  display: flex;
  height: 40px;
  padding-left: 8px;
  background: #cacaca;
}
.playback { display: flex; align-items: center; gap: 8px; padding-top: 3px; }
.playback svg { width: 14px; height: 14px; }
.track { position: relative; width: 214px; margin-left: 16px; padding-top: 8px; }
.track-bar { height: 4px; margin: 0 2px; background: #d8767a; }
.features {
  display: grid;
  grid-template-columns: repeat(10, 1fr);
  position: relative;
  height: 26px;
}
.features::before {
  content: "";
  position: absolute;
  left: 5%;
  right: 5%;
  bottom: 0;
  border-top: 1px solid #666;
}
.features button {
  display: flex;
  justify-content: center;
  position: relative;
  padding-top: 2px;
}
.features button::after {
  content: "";
  position: absolute;
  left: 50%;
  bottom: 0;
  height: 4px;
  border-left: 1px solid #666;
}
.features svg { width: 16px; height: 16px; }
.marker { position: absolute; right: -5px; top: 8px; width: 12px; height: 30px; }
.settings { margin-left: auto; margin-right: 6px; }
.settings svg { width: 14px; height: 14px; }

/* Sketch palette */
.palette {
  position: absolute;
  top: 127px;
  right: 14px;
  bottom: 0;
  width: 222px;
  overflow: hidden;
  background: #d1d1d1;
  border: 1px solid #a9a9a9;
  border-bottom: 0;
}
.palette-head {
  display: flex;
  align-items: center;
  gap: 10px;
  height: 21px;
  padding-left: 4px;
  border-bottom: 1px solid #b3b3b3;
}
.palette-body { padding: 0 0 18px; }
.palette h3 {
  display: flex;
  align-items: center;
  height: 23px;
  margin-bottom: 1px;
  font-size: 11px;
}
.fold {
  margin: 0 4px 0 1px;
  border: 4px solid transparent;
  border-top: 6px solid #333;
  border-bottom: 0;
}
.option {
  display: grid;
  grid-template-columns: 92px 18px;
  align-items: center;
  justify-items: center;
  height: 23px;
  padding-left: 8px;
}
.option label { justify-self: start; white-space: nowrap; }
.option svg { width: 15px; height: 15px; }
.option input {
  appearance: none;
  position: relative;
  width: 12px;
  height: 12px;
  margin: 0;
  border: 1px solid #666;
  border-radius: 3px;
  background: linear-gradient(#c9c9c9, #f1f1f1);
}
.option input:checked::after {
  content: "";
  position: absolute;
  left: 3px;
  top: 0;
  width: 4px;
  height: 8px;
  border: solid #222;
  border-width: 0 2px 2px 0;
  transform: rotate(38deg);
}
.palette-foot {
  display: flex;
  justify-content: flex-end;
  padding: 6px 14px;
  border-top: 1px solid #b3b3b3;
}
.stop {
  height: 20px;
  padding: 0 2px;
  background: #e6e6e6;
  border: 1px solid #f5f5f5;
  font-size: 11px;
}
```
